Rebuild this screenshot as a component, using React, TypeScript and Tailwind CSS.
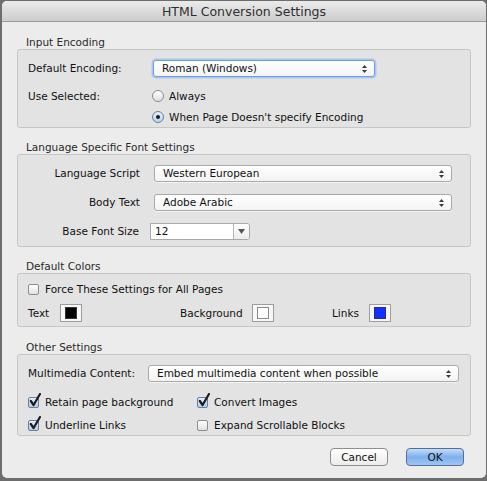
import React from 'react';

const font = { fontFamily: '"DejaVu Sans", "Liberation Sans", sans-serif' };

const Arrows = () => (
  <svg width="5" height="8" viewBox="0 0 5 8" className="shrink-0">
    <path d="M2.5 0 L5 3 L0 3 Z" fill="#3a3a3a" />
    <path d="M0 5 L5 5 L2.5 8 Z" fill="#3a3a3a" />
  </svg>
);

interface SelectProps {
  value: string;
  width: string;
  focused?: boolean;
}

const Select: React.FC<SelectProps> = ({ value, width, focused }) => (
  <div
    className={`${width} h-[17px] flex items-center justify-between pl-[8px] pr-[7px] rounded-[3px] bg-gradient-to-b from-white to-[#f3f3f3] border ${
      focused
        ? 'border-[#6f9ee0] shadow-[0_0_0_1.5px_#a9c8f0]'
        : 'border-[#a9a9a9] shadow-[0_1px_0_rgba(255,255,255,0.6)]'
    }`}
  >
    <span className="text-[#111] leading-none">{value}</span>
    <Arrows />
  </div>
);

const Radio: React.FC<{ checked?: boolean; label: string }> = ({ checked, label }) => (
  <div className="h-[14px] flex items-center">
    <div
      className={`w-[12px] h-[12px] rounded-full border flex items-center justify-center ${
        checked
          ? 'border-[#6c7f98] bg-gradient-to-b from-[#e6f0fb] to-[#b9d3ef]'
          : 'border-[#8c8c8c] bg-gradient-to-b from-white to-[#dedede]'
      }`}
    >
      {checked && <div className="w-[4px] h-[4px] rounded-full bg-[#1b1b1b]" />}
    </div>
    <span className="ml-[5px] text-[#111]">{label}</span>
  </div>
);

const Check: React.FC<{ checked?: boolean; label: string }> = ({ checked, label }) => (
  <div className="h-[14px] flex items-center">
    <div className="relative w-[11px] h-[11px] shrink-0">
      <div
        className={`w-[11px] h-[11px] rounded-[2px] border ${
          checked
            ? 'border-[#6c7f98] bg-gradient-to-b from-[#e3eefa] to-[#b3cdeb]'
            : 'border-[#8c8c8c] bg-gradient-to-b from-white to-[#e2e2e2]'
        }`}
      />
      {checked && (
        <svg width="13" height="14" viewBox="0 0 13 14" className="absolute left-[1px] top-[-4px]">
          <path d="M1.8 8 L4.6 12 L11 1" fill="none" stroke="#1d1d1d" strokeWidth="2.2" strokeLinejoin="round" strokeLinecap="round" />
        </svg>
      )}
    </div>
    <span className="ml-[6px] text-[#111]">{label}</span>
  </div>
);

const Swatch: React.FC<{ color: string }> = ({ color }) => (
  <div className="w-[22px] h-[18px] border border-[#9d9d9d] bg-[#f7f7f7] flex items-center justify-center">
    <div className={`w-[12px] h-[12px] border ${color}`} />
  </div>
);

const Section: React.FC<{ title: string; className?: string; children: React.ReactNode }> = ({
  title,
  className,
  children,
}) => (
  <div className={className}>
    <div className="h-[13px] leading-[13px] ml-[24px] text-[#2a2a2a]">{title}</div>
    <div className="mx-[15px] border border-[#c6c6c6] bg-[#e3e3e3] rounded-[3px]">{children}</div>
  </div>
);

const Button: React.FC<{ label: string; primary?: boolean }> = ({ label, primary }) => (
  <div
    className={`w-[58px] h-[18px] rounded-[4px] border flex items-center justify-center text-[#111] ${
      primary
        ? 'border-[#4f6f9f] bg-gradient-to-b from-[#c4dcf7] via-[#7fb0ec] to-[#9dc6f3]'
        : 'border-[#8e8e8e] bg-gradient-to-b from-white to-[#ececec]'
    }`}
  >
    {label}
  </div>
);

export default function App() {
  return (
    <div className="w-[487px] h-[481px] bg-[#6d6d6d] pl-[2px] pr-[1px] pt-[1px] overflow-hidden" style={font}>
      <div className="w-[484px] h-[477px] bg-[#ececec] rounded-[5px] overflow-hidden text-[10.5px] leading-[13px] flex flex-col">
        {/* Title bar */}
        <div className="h-[21px] shrink-0 bg-gradient-to-b from-[#ebebeb] to-[#cdcdcd] border-b border-[#9c9c9c] flex items-center justify-center">
          <span className="text-[12.5px] text-[#2e2e2e]">HTML Conversion Settings</span>
        </div>

        <div className="pt-[14px]">
          <Section title="Input Encoding">
            <div className="pl-[10px] pt-[10px] pb-[3px]">
              <div className="flex items-center h-[17px]">
                <span className="w-[125px] text-[#111]">Default Encoding:</span>
                <Select value="Roman (Windows)" width="w-[222px]" focused />
              </div>
              <div className="flex items-center mt-[12px]">
                <span className="w-[124px] text-[#111]">Use Selected:</span>
                <Radio label="Always" />
              </div>
              <div className="ml-[124px] mt-[7px]">
                <Radio checked label="When Page Doesn't specify Encoding" />
              </div>
            </div>
          </Section>

          <Section title="Language Specific Font Settings" className="mt-[13px]">
            <div className="pl-[10px] pt-[10px] pb-[6px] flex flex-col gap-[12px]">
              <div className="flex items-center">
                <span className="w-[112px] text-right text-[#111]">Language Script</span>
                <div className="ml-[14px]">
                  <Select value="Western European" width="w-[298px]" />
                </div>
              </div>
              <div className="flex items-center">
                <span className="w-[112px] text-right text-[#111]">Body Text</span>
                <div className="ml-[14px]">
                  <Select value="Adobe Arabic" width="w-[298px]" />
                </div>
              </div>
              <div className="flex items-center">
                <span className="w-[111px] text-right text-[#111]">Base Font Size</span>
                <div className="ml-[11px] w-[100px] h-[17px] flex border border-[#a9a9a9] rounded-r-[3px] bg-white">
                  <div className="flex-1 flex items-center pl-[4px] text-[#111]">12</div>
                  <div className="w-[16px] border-l border-[#b5b5b5] bg-gradient-to-b from-white to-[#ececec] rounded-r-[3px] flex items-center justify-center">
                    <svg width="7" height="5" viewBox="0 0 7 5">
                      <path d="M0 0 L7 0 L3.5 5 Z" fill="#555" />
                    </svg>
                  </div>
                </div>
              </div>
            </div>
          </Section>

          <Section title="Default Colors" className="mt-[13px]">
            <div className="pl-[10px] pt-[8px] pb-[4px]">
              <Check label="Force These Settings for All Pages" />
              <div className="mt-[8px] grid grid-cols-[32px_22px_98px_72px_22px_58px_37px_22px] items-center h-[18px] text-[#111]">
                <span>Text</span>
                <Swatch color="bg-black border-[#333]" />
                <span />
                <span>Background</span>
                <Swatch color="bg-white border-[#8a8a8a]" />
                <span />
                <span>Links</span>
                <Swatch color="bg-[#1030ff] border-[#2a2a8a]" />
              </div>
            </div>
          </Section>

          <Section title="Other Settings" className="mt-[14px]">
            <div className="pl-[10px] pt-[10px] pb-[3px]">
              <div className="flex items-center">
                <span className="w-[120px] text-[#111]">Multimedia Content:</span>
                <Select value="Embed multimedia content when possible" width="w-[311px]" />
              </div>
              <div className="mt-[13px] grid grid-cols-[169px_auto] gap-y-[9px]">
                <Check checked label="Retain page background" />
                <Check checked label="Convert Images" />
                <Check checked label="Underline Links" />
                <Check label="Expand Scrollable Blocks" />
              </div>
            </div>
          </Section>

          <div className="mt-[12px] flex justify-end gap-[18px] pr-[22px]">
            <Button label="Cancel" />
            <Button label="OK" primary />
          </div>
        </div>
      </div>
    </div>
  );
}
